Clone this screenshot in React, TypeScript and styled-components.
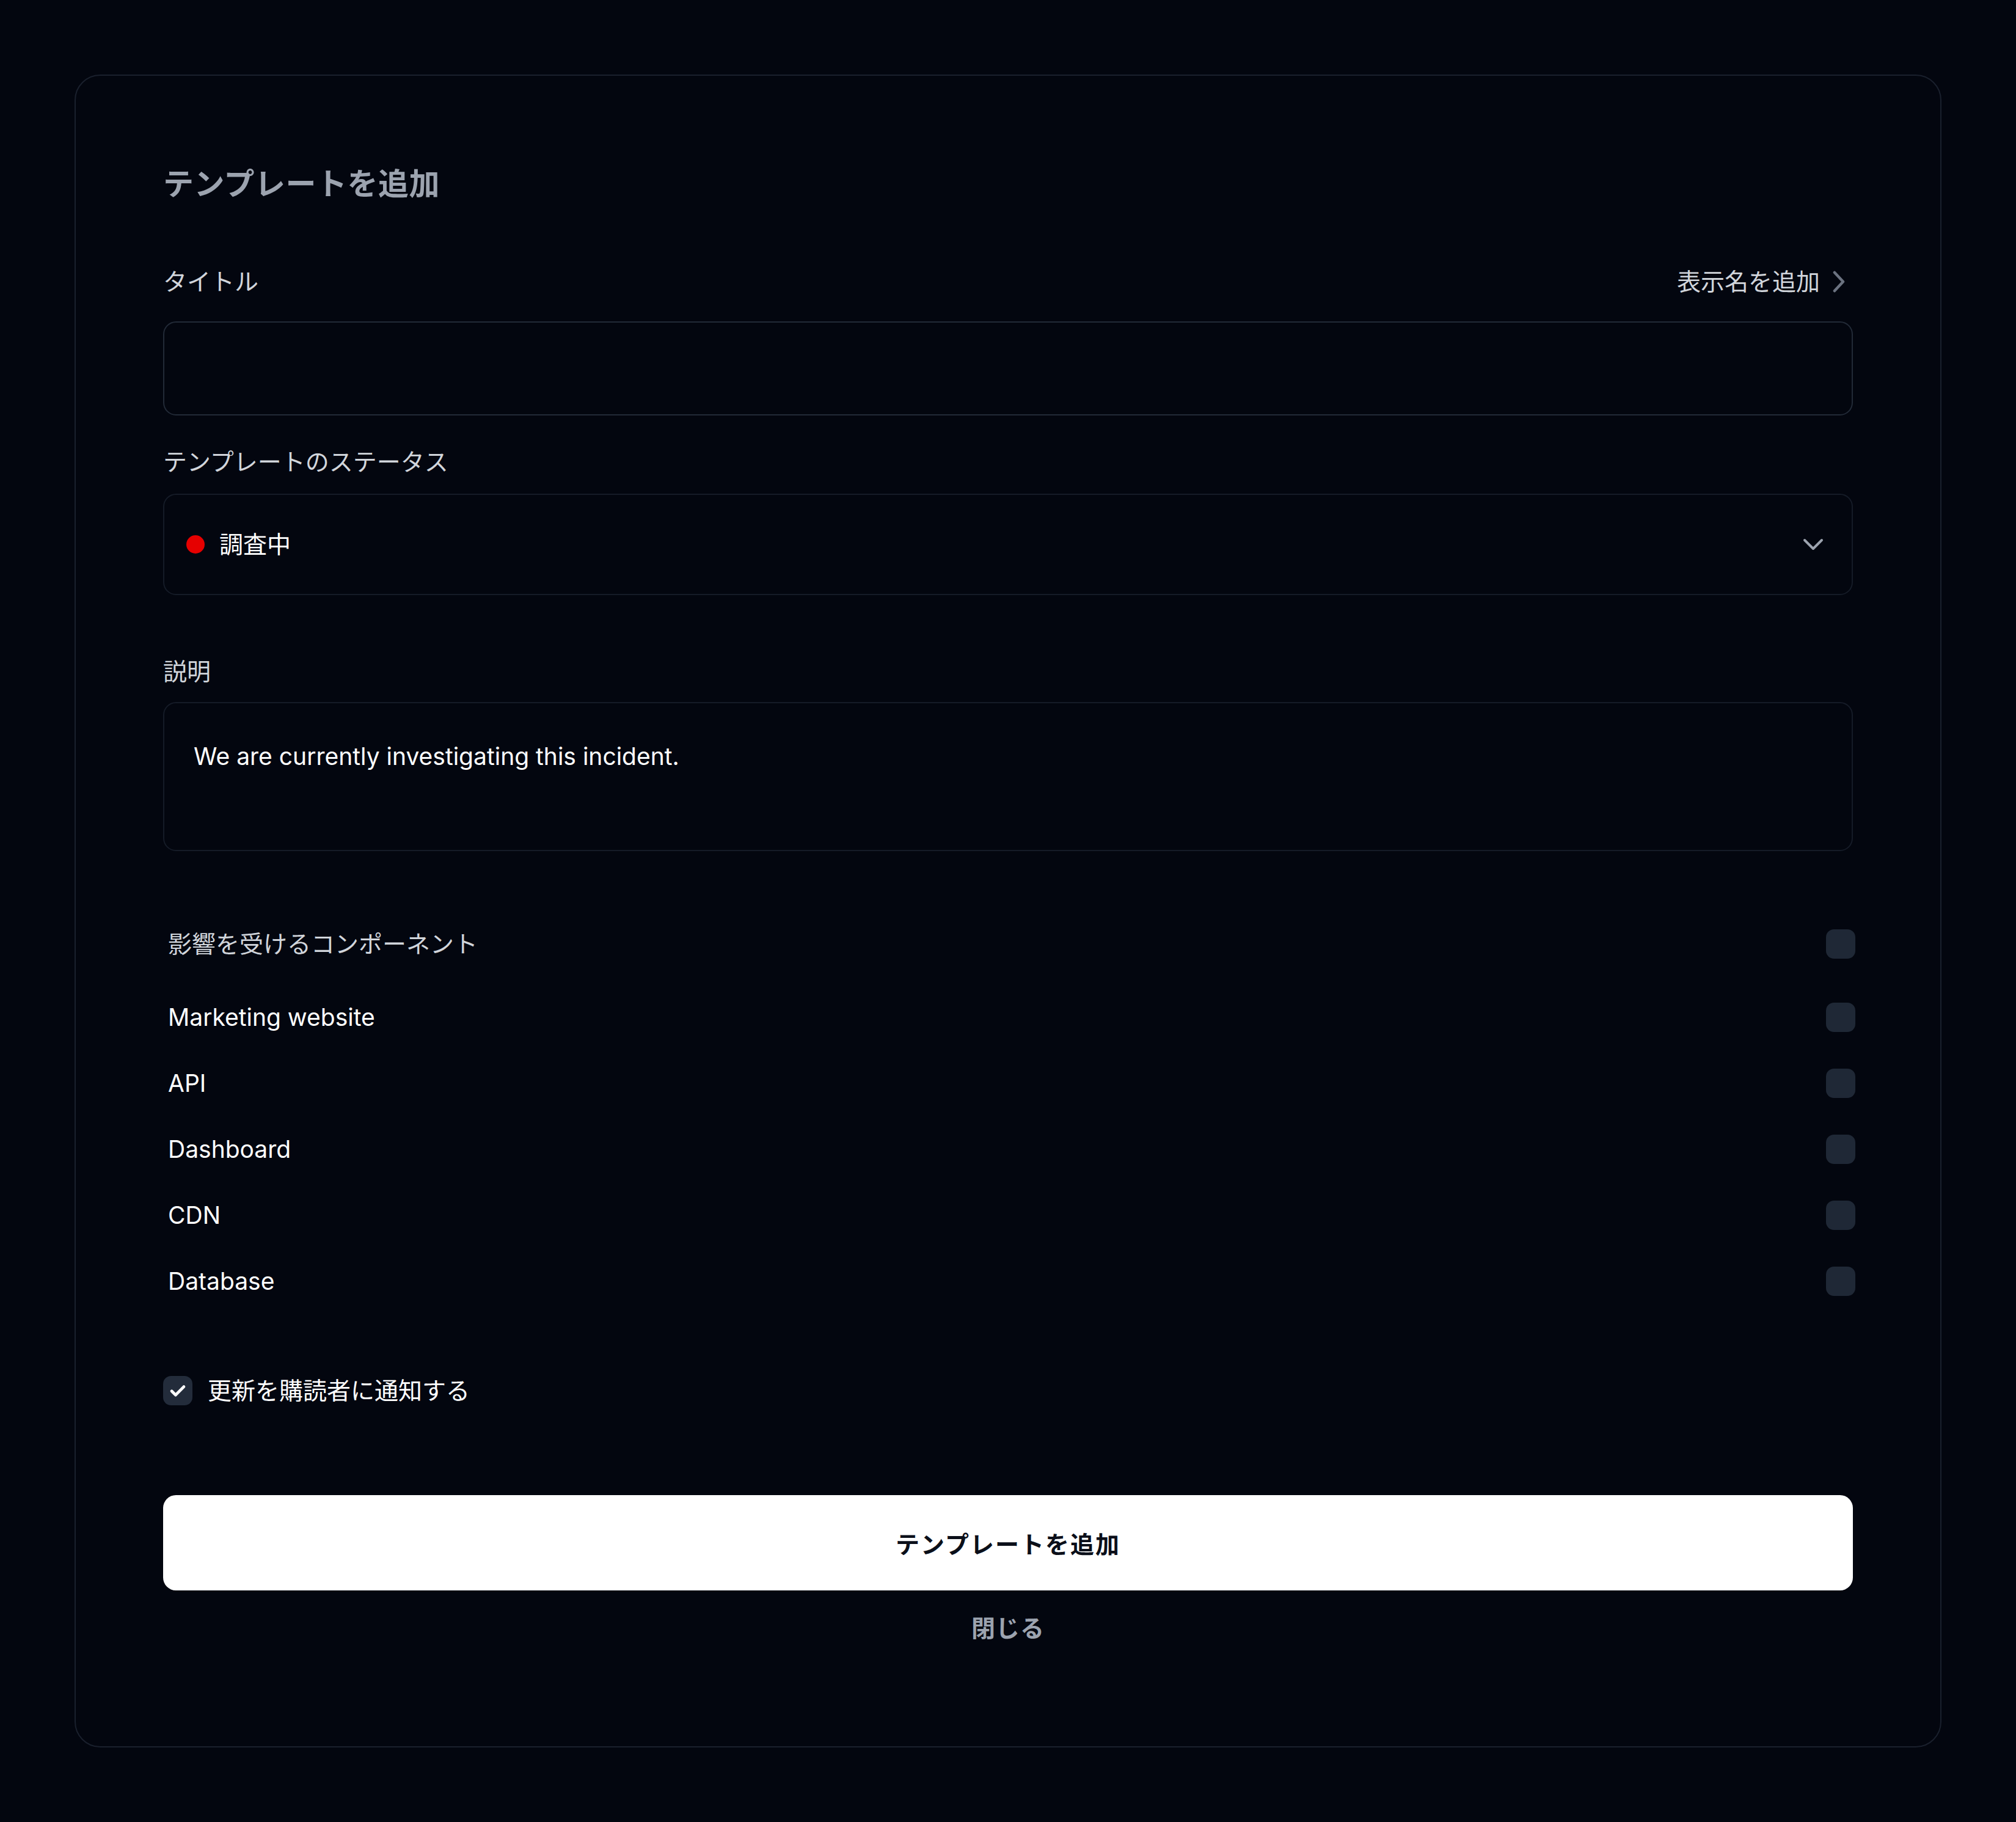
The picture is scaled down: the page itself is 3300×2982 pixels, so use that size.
import styled, { createGlobalStyle } from "styled-components";

const GlobalStyle = createGlobalStyle`
  html, body {
    margin: 0;
    padding: 0;
    background: #03060f;
  }
  body {
    font-family: Inter, "Noto Sans CJK JP", sans-serif;
    -webkit-font-smoothing: antialiased;
  }
`;

const components = ["Marketing website", "API", "Dashboard", "CDN", "Database"];

export default function App() {
  return (
    <>
      <GlobalStyle />
      <Page>
        <Card>
          <Heading>テンプレートを追加</Heading>

          <LabelRow>
            <Label>タイトル</Label>
            <LinkButton>
              表示名を追加
              <svg width="22" height="36" viewBox="0 0 22 36" fill="none">
                <path d="M4 3l14 15L4 33" stroke="#6b7280" strokeWidth="4.5" strokeLinecap="round" strokeLinejoin="round" />
              </svg>
            </LinkButton>
          </LabelRow>
          <TextInput />

          <Label $top={48}>テンプレートのステータス</Label>
          <Select>
            <StatusDot />
            <SelectValue>調査中</SelectValue>
            <svg width="34" height="22" viewBox="0 0 34 22" fill="none">
              <path d="M3 4l14 14L31 4" stroke="#9ca3af" strokeWidth="4" strokeLinecap="round" strokeLinejoin="round" />
            </svg>
          </Select>

          <Label $top={97}>説明</Label>
          <TextArea>We are currently investigating this incident.</TextArea>

          <ComponentList>
            <ComponentRow $header>
              <ComponentName $muted>影響を受けるコンポーネント</ComponentName>
              <Box />
            </ComponentRow>
            {components.map((name) => (
              <ComponentRow key={name}>
                <ComponentName>{name}</ComponentName>
                <Box />
              </ComponentRow>
            ))}
          </ComponentList>

          <NotifyRow>
            <Box $checked>
              <svg width="34" height="34" viewBox="0 0 24 24" fill="none">
                <path d="M5 12.5l4.5 4.5L19 7.5" stroke="#ffffff" strokeWidth="3.4" strokeLinecap="round" strokeLinejoin="round" />
              </svg>
            </Box>
            <NotifyText>更新を購読者に通知する</NotifyText>
          </NotifyRow>

          <PrimaryButton>テンプレートを追加</PrimaryButton>
          <CloseButton>閉じる</CloseButton>
        </Card>
      </Page>
    </>
  );
}

const Page = styled.div`
  padding: 122px;
  min-height: 2982px;
  box-sizing: border-box;
`;

const Card = styled.div`
  display: flex;
  flex-direction: column;
  box-sizing: border-box;
  width: 3056px;
  height: 2738px;
  padding: 143px 143px 0;
  border: 2px solid #1a202d;
  border-radius: 42px;
  background: #03060f;
`;

const Heading = styled.h2`
  margin: 0;
  font-size: 50px;
  line-height: 68px;
  font-weight: 700;
  color: #9ca3af;
  letter-spacing: 0.5px;
`;

const LabelRow = styled.div`
  display: flex;
  align-items: center;
  justify-content: space-between;
  margin-top: 98px;
`;

const Label = styled.div<{ $top?: number }>`
  margin-top: ${(p) => (p.$top ? `${p.$top}px` : "0")};
  font-size: 39px;
  line-height: 56px;
  color: #d1d5db;
`;

const LinkButton = styled.button`
  display: flex;
  align-items: center;
  gap: 20px;
  padding: 0 12px 0 0;
  border: none;
  background: none;
  font-family: inherit;
  font-size: 39px;
  line-height: 56px;
  color: #d1d5db;
`;

const TextInput = styled.input`
  box-sizing: border-box;
  margin-top: 37px;
  height: 154px;
  width: 100%;
  border: 2px solid #222a37;
  border-radius: 21px;
  background: transparent;
  color: #f9fafb;
  font-family: inherit;
  font-size: 39px;
  padding: 0 48px;
  outline: none;
`;

const Select = styled.div`
  box-sizing: border-box;
  display: flex;
  align-items: center;
  margin-top: 24px;
  height: 166px;
  padding: 0 46px 0 36px;
  border: 2px solid #151b27;
  border-radius: 21px;
`;

const StatusDot = styled.span`
  width: 30px;
  height: 30px;
  border-radius: 50%;
  background: #e60000;
  flex-shrink: 0;
`;

const SelectValue = styled.span`
  flex: 1;
  margin-left: 24px;
  font-size: 39px;
  line-height: 56px;
  color: #ffffff;
`;

const TextArea = styled.div`
  box-sizing: border-box;
  margin-top: 22px;
  height: 244px;
  padding: 59px 48px 0;
  border: 2px solid #151b27;
  border-radius: 21px;
  font-size: 39px;
  line-height: 56px;
  color: #ffffff;
`;

const ComponentList = styled.div`
  display: flex;
  flex-direction: column;
  gap: 52px;
  margin: 124px -4px 0 8px;
`;

const ComponentRow = styled.div<{ $header?: boolean }>`
  display: flex;
  align-items: center;
  justify-content: space-between;
  height: 56px;
  margin-bottom: ${(p) => (p.$header ? "12px" : "0")};
`;

const ComponentName = styled.span<{ $muted?: boolean }>`
  font-size: 39px;
  line-height: 56px;
  color: ${(p) => (p.$muted ? "#d1d5db" : "#ffffff")};
`;

const Box = styled.span<{ $checked?: boolean }>`
  display: flex;
  align-items: center;
  justify-content: center;
  width: 48px;
  height: 48px;
  border-radius: 13px;
  background: ${(p) => (p.$checked ? "#232c3b" : "#1f2836")};
  flex-shrink: 0;
`;

const NotifyRow = styled.div`
  display: flex;
  align-items: center;
  gap: 25px;
  margin-top: 123px;
  height: 56px;
`;

const NotifyText = styled.span`
  font-size: 39px;
  line-height: 56px;
  color: #ffffff;
`;

const PrimaryButton = styled.button`
  margin-top: 143px;
  height: 156px;
  width: 100%;
  border: none;
  border-radius: 21px;
  background: #ffffff;
  color: #0b0f19;
  font-family: inherit;
  font-size: 39px;
  font-weight: 700;
  letter-spacing: 2px;
`;

const CloseButton = styled.button`
  align-self: center;
  margin-top: 34px;
  border: none;
  background: none;
  padding: 0;
  font-family: inherit;
  font-size: 39px;
  line-height: 56px;
  font-weight: 700;
  color: #9ca3af;
  letter-spacing: 1px;
`;
